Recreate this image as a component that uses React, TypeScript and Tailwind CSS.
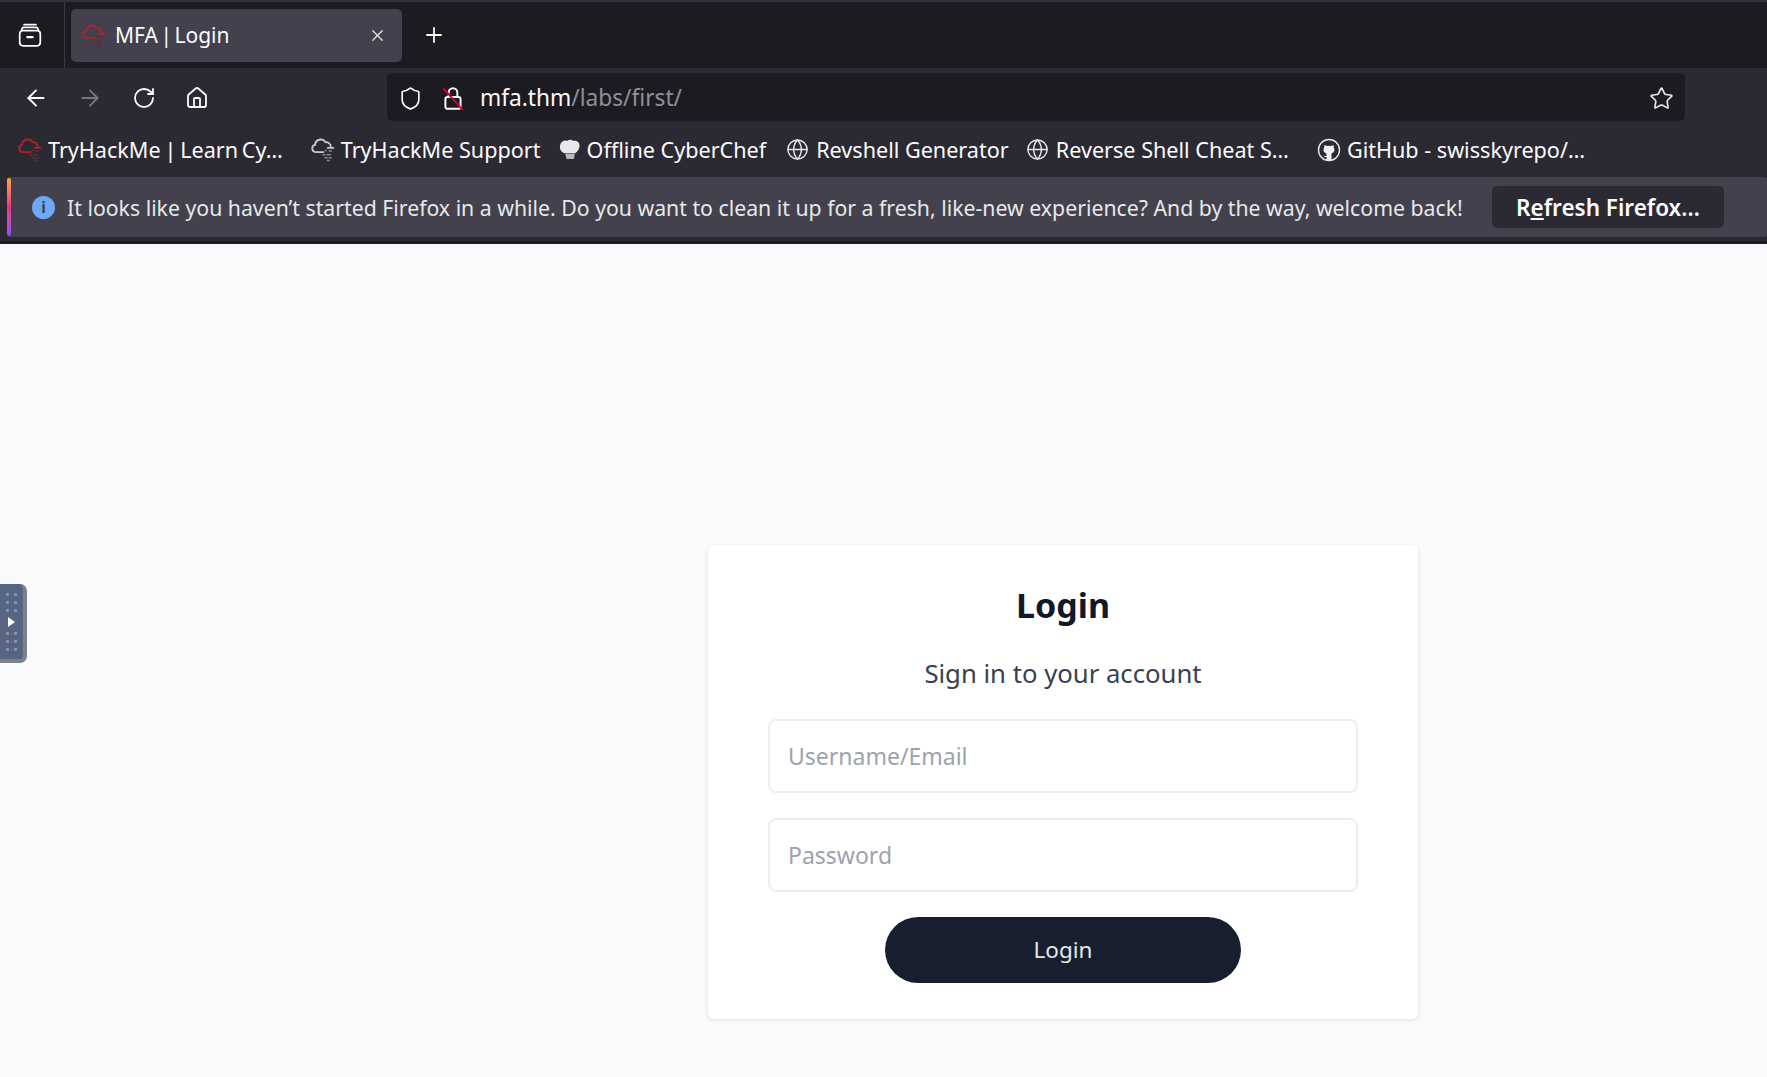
import { ArrowLeft, ArrowRight, Globe, House, Plus, RotateCw, Shield, Star, X } from "lucide-react";

const UI_FONT = "font-['Noto_Sans','Open_Sans',sans-serif]";

function CloudIcon({ color, dots }: { color: string; dots: string }) {
  return (
    <svg viewBox="0 0 24 24" className="h-[25px] w-[25px] shrink-0" fill="none">
      <path
        d="M7 14.500H4.500a3.500 3.500 0 0 1-.6-6.900A5.500 5.500 0 0 1 14 5a4.500 4.500 0 0 1 5 4.500"
        stroke={color}
        strokeWidth="1.800"
        strokeLinecap="round"
      />
      <path d="M16 10.500h5.500M7 14.500h5" stroke={color} strokeWidth="1.600" strokeLinecap="round" />
      <path d="M13 13h2M17 13.500h3M11 17h3M15 17h4M13 20h3M17 20h3M15 22.500h3" stroke={dots} strokeWidth="1.500" />
    </svg>
  );
}

function ChefIcon() {
  return (
    <svg viewBox="0 0 24 24" className="h-[23px] w-[23px] shrink-0">
      <path
        d="M7 16C3 14.500 1 11 2.500 6.500 3.500 3.500 7 2 9.500 3c2-1.500 5-1.500 6.500 0 3-1 6.500 1 6.500 5 0 3-2 6-4.500 8z"
        fill="#e8e8ea"
      />
      <path d="M7.500 16.500h10l-.8 5.500H9z" fill="#b9b9bd" />
    </svg>
  );
}

function GithubIcon() {
  return (
    <svg viewBox="0 0 24 24" className="h-[24px] w-[24px] shrink-0">
      <circle cx="12" cy="12" r="10.500" fill="#2b2a33" stroke="#e8e8ea" strokeWidth="1.400" />
      <path
        d="M7.500 7l2.500 1a7 7 0 0 1 4 0l2.500-1 .4 2.700c1 1.800.6 4.300-1.400 5.300-.8.400-1.300.6-1 1.500v5.500h-5V19c-1 .2-2.500 0-3-1.500.8.200 2 .8 3 .5v-1.500c.2-.9-.4-1.100-1.100-1.500-2-1-2.400-3.500-1.400-5.300z"
        fill="#f0f0f2"
      />
    </svg>
  );
}

function Bookmark({ icon, label, className }: { icon: React.ReactNode; label: string; className: string }) {
  return (
    <div className={`flex items-center ${className}`}>
      {icon}
      <span className="whitespace-nowrap text-[21.6px] leading-none text-[#fbfbfe]">{label}</span>
    </div>
  );
}

const dotRows = [0, 1, 2];

function DotRows() {
  return (
    <>
      {dotRows.map((r) => (
        <div key={r} className="flex gap-[5px]">
          <span className="h-[3px] w-[3px] bg-[#8590a6]" />
          <span className="h-[3px] w-[3px] bg-[#8590a6]" />
        </div>
      ))}
    </>
  );
}

function SidebarHandle() {
  return (
    <div className="absolute left-0 top-[584px] flex h-[79px] w-[27px] flex-col items-center justify-center gap-[5px] rounded-r-[7px] border-r-[4px] border-b-[4px] border-[#7d8288] bg-[#566582]">
      <DotRows />
      <span className="h-0 w-0 border-y-[5px] border-l-[7px] border-y-transparent border-l-white" />
      <DotRows />
    </div>
  );
}

export default function App() {
  return (
    <div className={`relative flex h-[1077px] w-[1767px] flex-col overflow-hidden bg-[#f9fafb] ${UI_FONT}`}>
      {/* Tab strip */}
      <div className="flex h-[68px] shrink-0 items-center border-t-[2px] border-[#33323c] bg-[#1c1b22]">
        <div className="flex h-full w-[65px] shrink-0 items-center justify-center border-r border-[#3a3944] pr-[5px]">
          <svg viewBox="0 0 24 24" className="h-[26px] w-[26px]" fill="none" stroke="#fbfbfe" strokeWidth="1.600">
            <path d="M6.500 2.500h11" strokeLinecap="round" />
            <path d="M4.500 7.500a2 2 0 0 1 2-2.500h11a2 2 0 0 1 2 2.500" />
            <rect x="2.500" y="8" width="19" height="14" rx="3" />
            <path d="M9.500 14h5" strokeLinecap="round" strokeWidth="2" />
          </svg>
        </div>
        <div className="ml-[6px] flex h-[53px] w-[331px] items-center rounded-[5px] bg-[#42414d] pl-[11px] pr-[15px]">
          <CloudIcon color="#b3202c" dots="#5f2c36" />
          <span className="ml-[8px] text-[21px] leading-none text-[#fbfbfe] [word-spacing:-3px]">MFA | Login</span>
          <X className="ml-auto h-[19px] w-[19px] text-[#e8e8ea]" strokeWidth={1.600} />
        </div>
        <Plus className="ml-[20px] h-[24px] w-[24px] text-[#fbfbfe]" strokeWidth={1.800} />
      </div>

      {/* Nav toolbar */}
      <div className="flex h-[54px] shrink-0 items-center border-t-[5px] border-[#2b2a33] bg-[#2b2a33] pb-[1px]">
        <div className="flex w-[387px] shrink-0 items-center pl-[23px] pt-[2px] text-[#fbfbfe]">
          <ArrowLeft className="h-[26px] w-[26px]" strokeWidth={1.800} />
          <ArrowRight className="ml-[28px] h-[26px] w-[26px] text-[#77767e]" strokeWidth={1.800} />
          <RotateCw className="ml-[29px] h-[24px] w-[24px]" strokeWidth={1.800} />
          <House className="ml-[29px] h-[24px] w-[24px]" strokeWidth={1.800} />
        </div>
        <div className="flex h-[48px] w-[1298px] items-center rounded-[5px] bg-[#1c1b22] pl-[11px] pr-[11px] pt-[2px]">
          <Shield className="h-[25px] w-[25px] text-[#fbfbfe]" strokeWidth={1.600} />
          <svg viewBox="0 0 24 24" className="ml-[17px] h-[26px] w-[26px]" fill="none">
            <rect x="5" y="11" width="14" height="11" rx="2" stroke="#fbfbfe" strokeWidth="1.800" />
            <path d="M8 11V7a4 4 0 0 1 8 0v4" stroke="#fbfbfe" strokeWidth="1.800" />
            <path d="M3 3l18 20" stroke="#d70022" strokeWidth="1.800" />
          </svg>
          <span className="ml-[14px] text-[22.7px] leading-none text-[#fbfbfe]">
            mfa.thm<span className="text-[#8f8f97]">/labs/first/</span>
          </span>
          <Star className="ml-auto h-[25px] w-[25px] text-[#e8e8ea]" strokeWidth={1.600} />
        </div>
      </div>

      {/* Bookmarks */}
      <div className="flex h-[55px] shrink-0 items-center bg-[#2b2a33] pl-[18px] [&>div:first-child>span]:[word-spacing:-1.800px]">
        <Bookmark icon={<CloudIcon color="#b3202c" dots="#5f2c36" />} label="TryHackMe | Learn Cy…" className="gap-[5px]" />
        <Bookmark icon={<CloudIcon color="#c8c8cc" dots="#8a8a90" />} label="TryHackMe Support" className="ml-[28px] gap-[5px]" />
        <Bookmark icon={<ChefIcon />} label="Offline CyberChef" className="ml-[17px] gap-[6px]" />
        <Bookmark icon={<Globe className="h-[23px] w-[23px] text-[#e8e8ea]" strokeWidth={1.500} />} label="Revshell Generator" className="ml-[20px] gap-[7px]" />
        <Bookmark icon={<Globe className="h-[23px] w-[23px] text-[#e8e8ea]" strokeWidth={1.500} />} label="Reverse Shell Cheat S…" className="ml-[17px] gap-[7px]" />
        <Bookmark icon={<GithubIcon />} label="GitHub - swisskyrepo/…" className="ml-[28px] gap-[6px]" />
      </div>

      {/* Notification bar */}
      <div className="h-[67px] shrink-0 border-b-[3px] border-[#1c1b22] bg-[#2b2a33]">
        <div className="relative ml-[7px] flex h-[60px] items-center rounded-[3px] bg-[#42414d] pl-[25px] pr-[43px]">
          <span className="absolute bottom-[1px] left-0 top-[1px] w-[4px] rounded-[2px] bg-gradient-to-b from-[#ffa436] via-[#e8307f] to-[#8f4cf5]" />
          <span className="flex h-[23px] w-[23px] items-center justify-center rounded-full bg-[#6fa8f5] text-[16px] font-semibold leading-none text-[#2b3a55]">
            i
          </span>
          <span className="ml-[12px] whitespace-nowrap pt-[2px] text-[21.26px] leading-none text-[#e8e8ea]">
            It looks like you haven’t started Firefox in a while. Do you want to clean it up for a fresh, like-new experience? And by the way, welcome back!
          </span>
          <button className="ml-auto flex h-[42px] w-[232px] items-center justify-center rounded-[5px] bg-[#2b2a33] pt-[2px] text-[22.5px] font-semibold leading-none text-[#fbfbfe]">
            R<span className="underline">e</span>fresh Firefox…
          </button>
        </div>
      </div>

      {/* Page */}
      <div className="flex flex-1 justify-end pr-[349px] pt-[301px]">
        <div className="flex h-[474px] w-[710px] flex-col items-center rounded-[6px] bg-white pt-[38px] shadow-[0_1px_4px_rgba(0,0,0,0.1)]">
          <h1 className="text-[34px] font-bold leading-[44px] text-[#111827]">Login</h1>
          <p className="mt-[29px] text-[25.7px] leading-[36px] text-[#374151]">Sign in to your account</p>
          <div className="mt-[27px] flex h-[74px] w-[590px] items-center rounded-[8px] border-[2px] border-[#eceef1] px-[18px]">
            <span className="text-[23px] leading-none text-[#9ca3af]">Username/Email</span>
          </div>
          <div className="mt-[25px] flex h-[74px] w-[590px] items-center rounded-[8px] border-[2px] border-[#eceef1] px-[18px]">
            <span className="text-[23px] leading-none text-[#9ca3af]">Password</span>
          </div>
          <button className="mt-[25px] flex h-[66px] w-[356px] items-center justify-center rounded-full bg-[#171f2e] text-[22.5px] leading-none text-[#e5e7eb]">
            Login
          </button>
        </div>
      </div>

      <SidebarHandle />
    </div>
  );
}
